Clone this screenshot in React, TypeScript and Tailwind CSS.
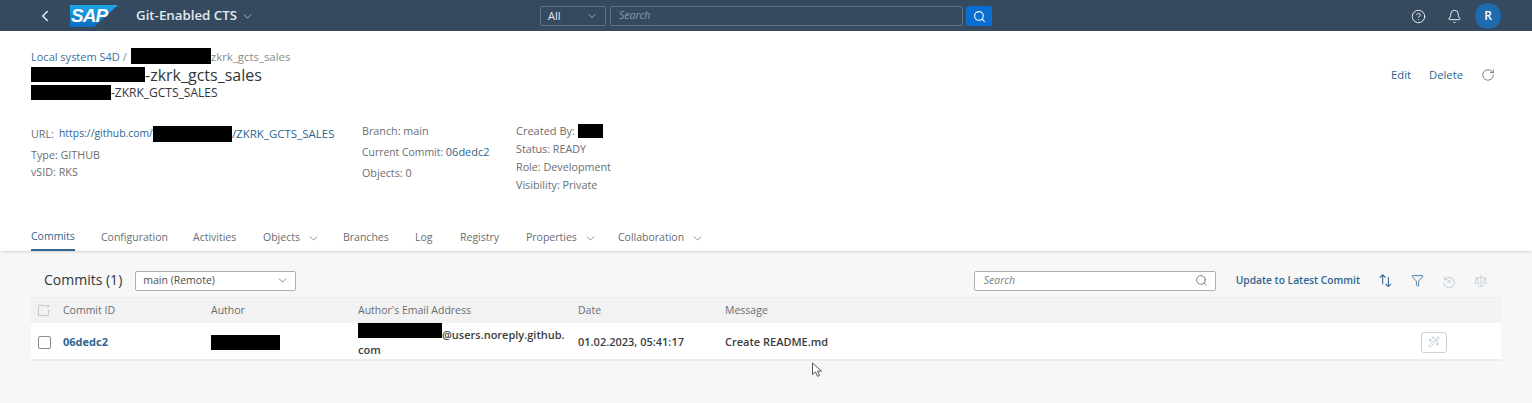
import { Bell, ChevronDown, ChevronLeft, CircleHelp, Funnel, RotateCw, Scale, Search, WandSparkles } from "lucide-react";

const TABS = [
  { label: "Commits", width: "w-[70px]", active: true },
  { label: "Configuration", width: "w-[92px]" },
  { label: "Activities", width: "w-[70px]" },
  { label: "Objects", width: "w-[80px]", menu: true },
  { label: "Branches", width: "w-[72px]" },
  { label: "Log", width: "w-[45px]" },
  { label: "Registry", width: "w-[66px]" },
  { label: "Properties", width: "w-[92px]", menu: true },
  { label: "Collaboration", width: "w-[100px]", menu: true },
];

function Redacted({ className }: { className: string }) {
  return <span className={`inline-block shrink-0 bg-black align-middle ${className}`} />;
}

function SapLogo() {
  return (
    <div className="relative h-[22px] w-[48px]">
      <svg viewBox="0 0 48 22" className="absolute inset-0 h-full w-full">
        <defs>
          <linearGradient id="sapBlue" x1="0" y1="0" x2="0" y2="1">
            <stop offset="0" stopColor="#1ea7e8" />
            <stop offset="1" stopColor="#0a6cc0" />
          </linearGradient>
        </defs>
        <polygon points="0,0 48,0 24,22 0,22" fill="url(#sapBlue)" />
      </svg>
      <span className="absolute left-[1px] top-[1px] font-['Liberation_Sans'] text-[19px] font-bold italic leading-[20px] tracking-[-1px] text-white">
        SAP
      </span>
    </div>
  );
}

function ShellBar() {
  return (
    <header className="flex h-[31px] items-center bg-[#354a5f] pt-px text-white">
      <div className="flex w-[540px] items-center">
        <ChevronLeft className="ml-[36px] h-[18px] w-[18px] text-[#e8edf2]" strokeWidth={2} />
        <div className="ml-[16px]">
          <SapLogo />
        </div>
        <span className="ml-[18px] text-[13.3px] font-semibold text-[#e4e9ee]">Git-Enabled CTS</span>
        <ChevronDown className="ml-[4px] h-[13px] w-[13px] text-[#c5ced7]" strokeWidth={1.5} />
      </div>
      <div className="flex h-[20px] w-[66px] items-center justify-between rounded-[2px] border border-[#5f7387] pl-[7px] pr-[7px] text-[11px] font-medium text-[#e4e9ee]">
        <span>All</span>
        <ChevronDown className="h-[12px] w-[12px] text-[#c5ced7]" strokeWidth={1.5} />
      </div>
      <div className="ml-[4px] flex h-[20px] w-[353px] items-center rounded-[2px] border border-[#5f7387] pl-[8px] text-[10.5px] italic text-[#8a9baa]">
        Search
      </div>
      <div className="ml-[3px] flex h-[20px] w-[26px] items-center justify-center rounded-[2px] bg-[#0a6ed1]">
        <Search className="h-[13px] w-[13px]" strokeWidth={2} />
      </div>
      <div className="ml-auto flex items-center">
        <CircleHelp className="h-[15px] w-[15px] text-[#e4e9ee]" strokeWidth={1.6} />
        <Bell className="ml-[21px] h-[15px] w-[15px] text-[#e4e9ee]" strokeWidth={1.6} />
        <div className="ml-[13px] mr-[31px] flex h-[26px] w-[26px] items-center justify-center rounded-full bg-[#1e6bb0] text-[12px] font-semibold">
          R
        </div>
      </div>
    </header>
  );
}

function ObjectHeader() {
  return (
    <section className="h-[192px] bg-white pl-[31px]">
      <div className="flex justify-between pr-[37px] pt-[17px]">
        <div>
          <div className="flex h-[16px] items-center text-[11px]">
            <span className="mt-[2px] text-[#3f6f96]">Local system S4D</span>
            <span className="ml-[3px] mt-[2px] text-[#8a8a8a]">/</span>
            <Redacted className="ml-[4px] h-[16px] w-[80px]" />
            <span className="mt-[2px] text-[11.4px] text-[#8a8a8a]">zkrk_gcts_sales</span>
          </div>
          <div className="mt-[3px] flex h-[15px] items-center text-[16px] text-[#32363a]">
            <Redacted className="h-[15px] w-[114px]" />
            <span>-zkrk_gcts_sales</span>
          </div>
          <div className="mt-[3px] flex h-[15px] items-center text-[12px] text-[#32363a]">
            <Redacted className="h-[15px] w-[80px]" />
            <span>-ZKRK_GCTS_SALES</span>
          </div>
        </div>
        <div className="mt-[20px] flex h-[14px] items-center text-[11.25px] font-medium text-[#30658f]">
          <span>Edit</span>
          <span className="ml-[18px]">Delete</span>
          <RotateCw className="ml-[18px] h-[14px] w-[14px] text-[#55697c]" strokeWidth={1.4} />
        </div>
      </div>
      <div className="mt-[24px] flex text-[10.75px] text-[#6a6d70]">
        <div className="w-[331px] pt-[2px]">
          <div className="flex h-[16px] items-center">
            <span className="w-[28px]">URL:</span>
            <span className="text-[10.4px] text-[#30658f]">https://github.com/</span>
            <Redacted className="h-[16px] w-[79px]" />
            <span className="text-[11.5px] text-[#30658f]">/ZKRK_GCTS_SALES</span>
          </div>
          <div className="mt-[5px] h-[16px] leading-[16px]">Type: GITHUB</div>
          <div className="mt-px h-[16px] leading-[16px]">vSID: RKS</div>
        </div>
        <div className="w-[154px]">
          <div className="-mt-px h-[16px] leading-[16px]">Branch: main</div>
          <div className="mt-[5px] h-[16px] text-[10.4px] leading-[16px]">
            Current Commit: <span className="text-[11px] text-[#30658f]">06dedc2</span>
          </div>
          <div className="mt-[5px] h-[16px] leading-[16px]">Objects: 0</div>
        </div>
        <div className="-mt-px">
          <div className="flex h-[16px] items-center text-[11px]">
            <span>Created By:&nbsp;</span>
            <Redacted className="-mt-[1px] h-[14px] w-[25px]" />
          </div>
          <div className="mt-[2px] h-[16px] leading-[16px]">Status: READY</div>
          <div className="mt-[2px] h-[16px] leading-[16px]">Role: Development</div>
          <div className="mt-[2px] h-[16px] leading-[16px]">Visibility: Private</div>
        </div>
      </div>
    </section>
  );
}

function TabBar() {
  return (
    <nav className="relative flex h-[28px] items-start bg-white pl-[31px] text-[10.5px] text-[#6a6d70] shadow-[0_2px_2px_-1px_rgba(0,0,0,0.15)]">
      {TABS.map((tab) => (
        <div key={tab.label} className={`flex h-[28px] items-start ${tab.width}`}>
          <div
            className={`flex h-[28px] items-center pt-[2px] ${
              tab.active ? "border-b-2 border-[#30658f] font-medium text-[#30658f]" : ""
            }`}
          >
            {tab.label}
            {tab.menu && <ChevronDown className="ml-[7px] h-[13px] w-[13px] text-[#6f7f8e]" strokeWidth={1.5} />}
          </div>
        </div>
      ))}
    </nav>
  );
}

function SortIcon() {
  return (
    <svg viewBox="0 0 16 16" className="h-[15px] w-[15px] fill-none stroke-[#30658f]" strokeWidth={1.15}>
      <path d="M5 12V2M2 5l3-3 3 3" />
      <path d="M11 4.5v10M8 11.5l3 3 3-3" />
    </svg>
  );
}

function UndoX() {
  return (
    <svg viewBox="0 0 16 16" className="h-[14px] w-[14px] fill-none stroke-[#bccad4]" strokeWidth={1.1}>
      <path d="M3 3.5v3h3M3.2 6.4A6 6 0 1 1 2.2 10" />
      <path d="M6 6.5l4 4M10 6.5l-4 4" />
    </svg>
  );
}

function CommitsPanel() {
  return (
    <section className="flex-1 bg-[#f7f7f7] pl-[31px] pr-[31px]">
      <div className="flex h-[46px] items-center pl-[13px] pr-[13px] pt-[13px]">
        <span className="-mt-[2px] text-[14px] text-[#32363a]">Commits (1)</span>
        <div className="ml-[13px] flex h-[20px] w-[161px] items-center justify-between rounded-[2px] border border-[#a9b0b6] bg-white pl-[7px] pr-[6px] text-[10.5px] text-[#4a4d50]">
          <span>main (Remote)</span>
          <ChevronDown className="h-[13px] w-[13px] text-[#55697c]" strokeWidth={1.4} />
        </div>
        <div className="ml-auto flex h-[20px] w-[242px] items-center justify-between rounded-[2px] border border-[#a9b0b6] bg-white pl-[9px] pr-[7px] text-[10.5px] italic text-[#7c7f82]">
          <span>Search</span>
          <Search className="h-[13px] w-[13px] text-[#55697c]" strokeWidth={1.5} />
        </div>
        <span className="ml-[20px] text-[10.25px] font-semibold text-[#30658f]">Update to Latest Commit</span>
        <div className="ml-[18px]">
          <SortIcon />
        </div>
        <Funnel className="ml-[18px] h-[13px] w-[13px] text-[#30658f]" strokeWidth={1.5} />
        <div className="ml-[18px]">
          <UndoX />
        </div>
        <Scale className="ml-[18px] h-[14px] w-[14px] text-[#bccad4]" strokeWidth={1.3} />
      </div>

      <div className="flex h-[26px] items-center border-t border-[#ececec] bg-[#f2f2f2] text-[10.5px] text-[#6a6d70]">
        <svg viewBox="0 0 14 14" className="ml-[6px] h-[13px] w-[13px] fill-none stroke-[#c4c4c4]" strokeWidth={1}>
          <path d="M9 1.5H1.5v11h11V6" />
          <path d="M10.5 1l2.5 2.5M13 1l-2.5 2.5" />
        </svg>
        <span className="ml-[13px] w-[148px]">Commit ID</span>
        <span className="w-[147px]">Author</span>
        <span className="w-[220px]">Author's Email Address</span>
        <span className="w-[147px]">Date</span>
        <span>Message</span>
      </div>

      <div className="flex h-[38px] items-center border-b-2 border-[#ececec] bg-white pt-[2px] text-[11px] font-semibold text-[#3a3d40]">
        <span className="ml-[7px] h-[13px] w-[13px] rounded-[2px] border border-[#8a8d90] bg-white" />
        <span className="ml-[12px] w-[148px] font-bold text-[#30658f]">06dedc2</span>
        <div className="w-[147px]">
          <Redacted className="h-[15px] w-[69px]" />
        </div>
        <div className="-mt-[2px] w-[220px] self-start leading-[15px]">
          <div className="flex h-[15px] items-start">
            <Redacted className="h-[15px] w-[84px]" />
            <span className="mt-[4px]">@users.noreply.github.</span>
          </div>
          <div className="mt-[4px]">com</div>
        </div>
        <span className="w-[147px]">01.02.2023, 05:41:17</span>
        <span>Create README.md</span>
        <div className="ml-auto mr-[54px] flex h-[21px] w-[26px] items-center justify-center rounded-[3px] border border-[#c9d1d8] bg-white">
          <WandSparkles className="h-[12px] w-[12px] text-[#a9b7c3]" strokeWidth={1.4} />
        </div>
      </div>
    </section>
  );
}

export default function App() {
  return (
    <div className="relative flex h-[403px] w-[1532px] flex-col overflow-hidden bg-white font-['Open_Sans',sans-serif]">
      <ShellBar />
      <ObjectHeader />
      <TabBar />
      <CommitsPanel />
      {/* mouse pointer caught in the capture */}
      <svg viewBox="0 0 12 16" className="absolute left-[811px] top-[362px] h-[16px] w-[12px] fill-white stroke-[#44484c]" strokeWidth={0.9}>
        <path d="M1.5 1v11.5l3-2.6 2 4.4 2-.9-2-4.3h4z" />
      </svg>
    </div>
  );
}
